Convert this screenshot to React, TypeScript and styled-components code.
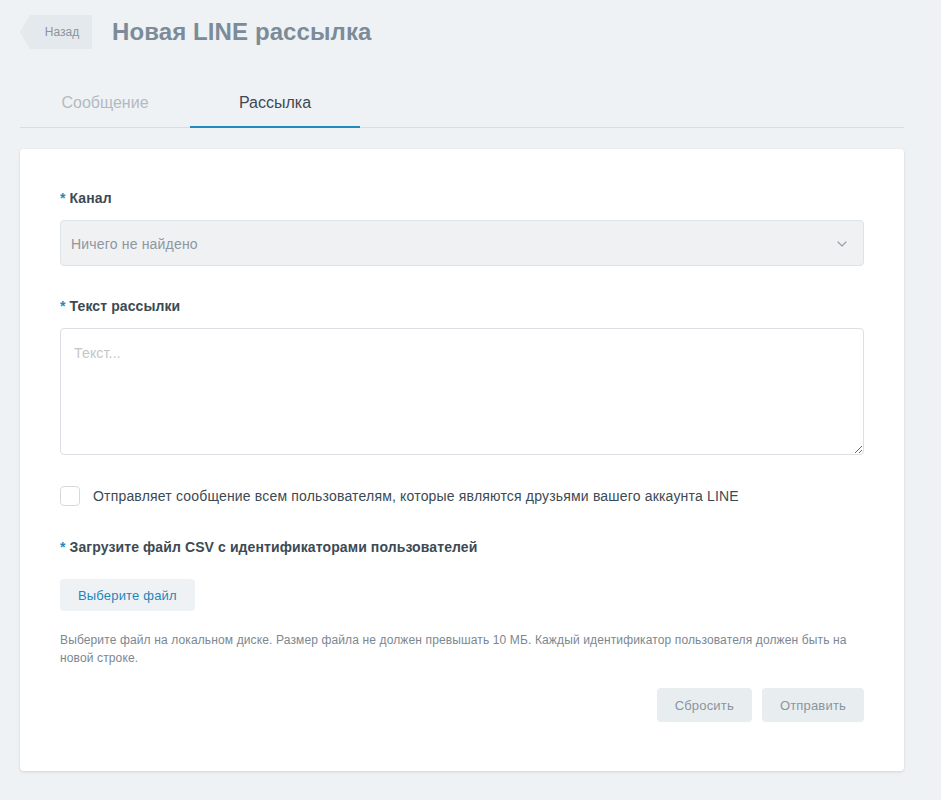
import React from "react";
import styled, { createGlobalStyle } from "styled-components";

const Global = createGlobalStyle`
  html, body { margin: 0; padding: 0; background: #eff2f5; }
  body { font-family: "Liberation Sans", Arial, sans-serif; color: #3c4a54; }
  * { box-sizing: border-box; }
`;

const Page = styled.div`
  padding: 15px 37px 28px 20px;
  min-height: 800px;
`;

const Header = styled.div`
  display: flex;
  align-items: center;
  gap: 20px;
  height: 34px;
`;

const BackButton = styled.button`
  position: relative;
  height: 34px;
  width: 72px;
  padding: 0 0 0 12px;
  border: none;
  background: transparent;
  font-family: inherit;
  font-size: 12px;
  color: #8a959e;
  cursor: pointer;
  display: flex;
  align-items: center;
  justify-content: center;
  &::before {
    content: "";
    position: absolute;
    inset: 0;
    background: #e4e9ed;
    clip-path: polygon(10px 0, 100% 0, 100% 100%, 10px 100%, 0 50%);
    z-index: 0;
  }
  span { position: relative; z-index: 1; }
`;

const Title = styled.h1`
  margin: 0;
  font-size: 24px;
  font-weight: 700;
  letter-spacing: 0.1px;
  color: #7b8c98;
`;

const Tabs = styled.div`
  display: flex;
  margin-top: 35px;
  border-bottom: 1px solid #d7dee3;
`;

const Tab = styled.div<{ $active?: boolean }>`
  width: 170px;
  height: 44px;
  display: flex;
  align-items: center;
  justify-content: center;
  font-size: 16px;
  color: ${(p) => (p.$active ? "#3c4a54" : "#b2bac1")};
  border-bottom: 2px solid ${(p) => (p.$active ? "#1f8bbf" : "transparent")};
  margin-bottom: -1px;
  padding-bottom: 4px;
`;

const Card = styled.div`
  margin-top: 21px;
  background: #fff;
  border-radius: 4px;
  box-shadow: 0 1px 3px rgba(0, 0, 0, 0.12);
  padding: 40px 40px 49px 40px;
  letter-spacing: 0.18px;
`;

const Field = styled.div`
  display: flex;
  flex-direction: column;
  gap: 13px;
  margin-bottom: 31px;
`;

const Label = styled.label`
  font-size: 14px;
  font-weight: 700;
  color: #3c4a54;
  line-height: 18px;
  letter-spacing: 0.1px;
  &::before {
    content: "* ";
    color: #1f8bbf;
  }
`;

const Select = styled.div`
  height: 46px;
  background: #eff1f3;
  border: 1px solid #dfe3e7;
  border-radius: 4px;
  display: flex;
  align-items: center;
  justify-content: space-between;
  padding: 2px 16px 0 10px;
  font-size: 14px;
  color: #8d979f;
`;

const TextArea = styled.textarea`
  height: 127px;
  width: 100%;
  border: 1px solid #dcdfe3;
  border-radius: 4px;
  padding: 16px 13px;
  font-family: inherit;
  font-size: 14px;
  letter-spacing: 0.18px;
  color: #3c4a54;
  resize: vertical;
  outline: none;
  &::placeholder { color: #c2c6ca; }
`;

const CheckRow = styled.label`
  display: flex;
  align-items: center;
  gap: 13px;
  font-size: 14px;
  color: #3c4a54;
  margin-top: 0;
  margin-bottom: 32px;
`;

const Box = styled.span`
  width: 20px;
  height: 20px;
  border: 1px solid #d6dadf;
  border-radius: 4px;
  background: #fff;
  flex-shrink: 0;
`;

const FileButton = styled.button`
  align-self: flex-start;
  height: 32px;
  padding: 0 18px;
  border: none;
  border-radius: 4px;
  background: #eff2f5;
  color: #1f86b8;
  font-family: inherit;
  font-size: 13px;
  letter-spacing: 0.18px;
  margin-top: 10px;
`;

const Help = styled.p`
  margin: -11px 0 0;
  font-size: 12px;
  line-height: 18px;
  letter-spacing: 0.13px;
  color: #7b8792;
`;

const Actions = styled.div`
  display: flex;
  justify-content: flex-end;
  gap: 10px;
  margin-top: 21px;
`;

const ActionButton = styled.button`
  height: 34px;
  padding: 0 18px;
  border: none;
  border-radius: 4px;
  background: #e8edf0;
  color: #8a959e;
  font-family: inherit;
  font-size: 13px;
  letter-spacing: 0.18px;
`;

const Chevron = () => (
  <svg width="10" height="6" viewBox="0 0 10 6" fill="none">
    <path d="M1 1l4 4 4-4" stroke="#9aa3aa" strokeWidth="1.2" strokeLinecap="round" strokeLinejoin="round" />
  </svg>
);

export default function App() {
  return (
    <>
      <Global />
      <Page>
        <Header>
          <BackButton>
            <span>Назад</span>
          </BackButton>
          <Title>Новая LINE рассылка</Title>
        </Header>
        <Tabs>
          <Tab>Сообщение</Tab>
          <Tab $active>Рассылка</Tab>
        </Tabs>
        <Card>
          <Field>
            <Label>Канал</Label>
            <Select>
              <span>Ничего не найдено</span>
              <Chevron />
            </Select>
          </Field>
          <Field>
            <Label>Текст рассылки</Label>
            <TextArea placeholder="Текст..." />
          </Field>
          <CheckRow>
            <Box />
            Отправляет сообщение всем пользователям, которые являются друзьями вашего аккаунта LINE
          </CheckRow>
          <Field>
            <Label>Загрузите файл CSV с идентификаторами пользователей</Label>
            <FileButton>Выберите файл</FileButton>
          </Field>
          <Help>
            Выберите файл на локальном диске. Размер файла не должен превышать 10 МБ. Каждый идентификатор пользователя должен быть на новой строке.
          </Help>
          <Actions>
            <ActionButton>Сбросить</ActionButton>
            <ActionButton>Отправить</ActionButton>
          </Actions>
        </Card>
      </Page>
    </>
  );
}
